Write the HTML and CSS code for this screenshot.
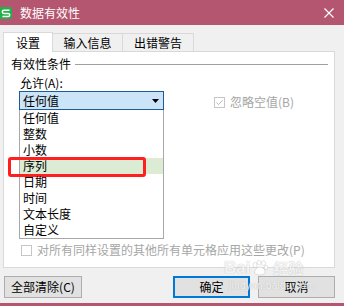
FILE: index.html
```html
<!DOCTYPE html>
<html lang="zh-CN">
<head>
<meta charset="utf-8">
<title>数据有效性</title>
<link rel="stylesheet" href="styles.css">
</head>
<body>
<div class="window">
  <header class="titlebar">
    <svg class="logo" width="12" height="12" viewBox="0 0 12 12">
      <rect x="-1" y="0" width="13" height="12" rx="2.5" fill="#22b04a"/>
      <path d="M9.6 3.2 H3.9 A1.6 1.6 0 0 0 3.9 6.4 H8.1 A1.6 1.6 0 0 1 8.1 9.6 H2.4" fill="none" stroke="#fff" stroke-width="1.5"/>
    </svg>
    <span class="title">数据有效性</span>
    <svg class="close" width="10" height="10" viewBox="0 0 10 10">
      <path d="M0.5 0.5 L9.5 9.5 M9.5 0.5 L0.5 9.5" stroke="#fff" stroke-width="1.2"/>
    </svg>
  </header>

  <main class="content">
    <nav class="tabs">
      <div class="tab tab-active tab-w1">设置</div>
      <div class="tab tab-w2">输入信息</div>
      <div class="tab tab-w3">出错警告</div>
    </nav>

    <section class="panel">
      <div class="group-head">
        <span>有效性条件</span>
        <span class="rule"></span>
      </div>

      <div class="criteria">
        <div class="allow">
          <div class="label">允许(A):</div>
          <div class="combo">
            <span>任何值</span>
            <svg width="7" height="4" viewBox="0 0 7 4"><polygon points="0,0 7,0 3.5,4" fill="#000"/></svg>
          </div>
          <ul class="list">
            <li>任何值</li>
            <li>整数</li>
            <li>小数</li>
            <li class="selected">序列<span class="annot"></span></li>
            <li>日期</li>
            <li>时间</li>
            <li>文本长度</li>
            <li>自定义</li>
          </ul>
        </div>

        <label class="check check-ignore">
          <span class="box">
            <svg width="9" height="9" viewBox="0 0 9 9"><path d="M1.5 4.6 L3.6 6.6 L7.6 2.2" fill="none" stroke="#b8b8b8" stroke-width="1"/></svg>
          </span>
          <span>忽略空值(B)</span>
        </label>
      </div>

      <label class="check check-all">
        <span class="box"></span>
        <span>对所有同样设置的其他所有单元格应用这些更改(P)</span>
      </label>
    </section>

    <div class="buttons">
      <button class="btn btn-clear">全部清除(C)</button>
      <span class="spacer"></span>
      <button class="btn btn-ok">确定</button>
      <button class="btn">取消</button>
    </div>
  </main>

  <div class="watermark">
    <div class="wm-logo">
      <span>Bai</span>
      <svg width="17" height="16" viewBox="0 0 17 16">
        <g fill="rgba(255,255,255,0.85)" stroke="rgba(150,150,150,0.45)" stroke-width="0.6">
          <ellipse cx="4" cy="5" rx="2" ry="2.6"/>
          <ellipse cx="8" cy="2.6" rx="2" ry="2.4"/>
          <ellipse cx="12.5" cy="3.2" rx="2" ry="2.4"/>
          <ellipse cx="15" cy="7.5" rx="1.8" ry="2.2"/>
          <path d="M3.5 13 C3.5 9 7 7 9 7 C12 7 14.5 10 14 13 C13.5 15.5 5 15.5 3.5 13 Z"/>
        </g>
      </svg>
      <span class="wm-cn">经验</span>
    </div>
    <div class="wm-url">jingyan.baidu.com</div>
  </div>
</div>
</body>
</html>
```

FILE: styles.css
```css
* {
  box-sizing: border-box;
}

html, body {
  margin: 0;
  padding: 0;
}

body {
  width: 344px;
  height: 306px;
  overflow: hidden;
  background: #f0f0f0;
  font-family: "Noto Sans CJK SC", "Noto Sans", sans-serif;
  font-size: 12px;
  color: #000;
}

.window {
  position: relative;
  width: 344px;
  height: 306px;
  display: flex;
  flex-direction: column;
  background: #f0f0f0;
  border-bottom: 3px solid #b4566f;
}

/* Title bar */
.titlebar {
  height: 25px;
  flex: none;
  display: flex;
  align-items: center;
  background: #b4566f;
  color: #fff;
}

.logo {
  flex: none;
  margin-top: 0;
}

.title {
  margin-left: 8px;
  font-size: 12px;
  line-height: 16px;
  color: #fff;
}

.close {
  margin-left: auto;
  margin-right: 10px;
}

/* Content */
.content {
  padding: 7px 9px 0 3px;
  display: flex;
  flex-direction: column;
}

.tabs {
  display: flex;
  align-items: flex-end;
  height: 20px;
  margin-bottom: -1px;
}

.tab {
  height: 18px;
  margin-bottom: 1px;
  border: 1px solid #d9d9d9;
  border-bottom: none;
  border-left: none;
  background: #f0f0f0;
  display: flex;
  align-items: center;
  justify-content: center;
  line-height: 16px;
}

.tab-active {
  position: relative;
  z-index: 1;
  height: 20px;
  margin-bottom: 0;
  background: #fff;
  border-left: 1px solid #d9d9d9;
}

.tab-w1 { width: 50px; }
.tab-w2 { width: 70px; }
.tab-w3 { width: 71px; }

/* Panel */
.panel {
  height: 217px;
  background: #fff;
  border: 1px solid #d9d9d9;
  padding: 4px 6px 0 7px;
}

.group-head {
  display: flex;
  align-items: center;
  height: 16px;
  line-height: 16px;
}

.rule {
  flex: 1;
  height: 1px;
  margin-left: 4px;
  background: #a0a0a0;
}

.criteria {
  display: flex;
  align-items: flex-start;
}

.allow {
  width: 145px;
  margin-left: 8px;
  margin-top: 3px;
}

.label {
  height: 16px;
  line-height: 16px;
  padding-left: 1px;
}

.combo {
  height: 19px;
  border: 1px solid #1d5a96;
  background: #cce4f7;
  display: flex;
  align-items: center;
  justify-content: space-between;
  padding: 0 4px 0 3px;
  line-height: 16px;
}

.list {
  list-style: none;
  margin: 0;
  padding: 0;
  border: 1px solid #a8a8a8;
  border-top: none;
}

.list li {
  position: relative;
  height: 16px;
  line-height: 16px;
  padding-left: 3px;
}

.list li.selected {
  background: #dcebd3;
}

.annot {
  position: absolute;
  left: -12px;
  top: -1px;
  width: 138px;
  height: 20px;
  border: 3px solid #ff1f1f;
  border-radius: 3px;
}

/* Checkboxes */
.check {
  display: flex;
  align-items: center;
  gap: 5px;
  color: #a6a6a6;
  line-height: 16px;
}

.box {
  width: 11px;
  height: 11px;
  border: 1px solid #c6c6c6;
  background: #fff;
  display: flex;
  align-items: center;
  justify-content: center;
  flex: none;
}

.check-ignore {
  margin-left: 50px;
  margin-top: 22px;
  height: 16px;
}

.check-all {
  margin-left: 10px;
  margin-top: 3px;
  height: 16px;
}

/* Buttons */
.buttons {
  display: flex;
  margin-top: 8px;
  gap: 8px;
}

.spacer {
  flex: 1;
}

.btn {
  height: 22px;
  width: 77px;
  background: #e1e1e1;
  border: 1px solid #adadad;
  font-family: "Noto Sans CJK SC", "Noto Sans", sans-serif;
  font-size: 12px;
  line-height: 18px;
  color: #000;
  padding: 0;
}

.btn-clear {
  width: 78px;
  margin-left: 1px;
}

.btn-ok {
  border: 2px solid #0078d7;
}

/* Watermark */
.watermark {
  position: absolute;
  left: 224px;
  top: 258px;
  width: 96px;
  pointer-events: none;
  color: rgba(255, 255, 255, 0.85);
}

.wm-logo {
  display: flex;
  align-items: center;
  gap: 1px;
  font-family: "Liberation Sans", Arial, sans-serif;
  font-weight: bold;
  font-size: 17px;
  line-height: 20px;
  text-shadow: 0 0 1px rgba(120, 120, 120, 0.55);
}

.wm-cn {
  margin-left: 4px;
  font-family: "Noto Sans CJK SC", sans-serif;
  font-size: 15px;
}

.wm-url {
  margin-top: 3px;
  margin-left: 5px;
  font-family: "Liberation Sans", Arial, sans-serif;
  font-size: 10px;
  line-height: 10px;
  letter-spacing: 0.3px;
  text-shadow: 0 0 1px rgba(120, 120, 120, 0.5);
}
```
